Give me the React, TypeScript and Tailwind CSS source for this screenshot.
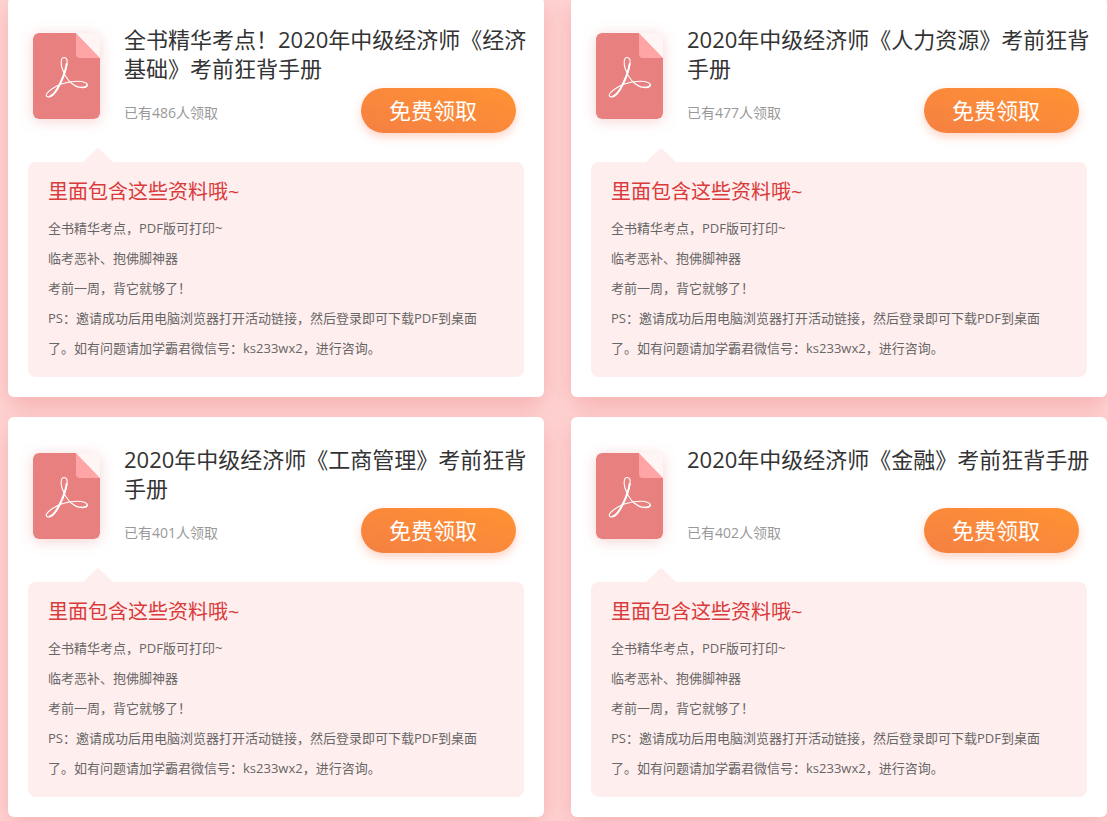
type Material = {
  id: string;
  title: string;
  claimed: number;
};

const materials: Material[] = [
  {
    id: "economy",
    title: "全书精华考点！2020年中级经济师《经济基础》考前狂背手册",
    claimed: 486,
  },
  {
    id: "hr",
    title: "2020年中级经济师《人力资源》考前狂背手册",
    claimed: 477,
  },
  {
    id: "business",
    title: "2020年中级经济师《工商管理》考前狂背手册",
    claimed: 401,
  },
  {
    id: "finance",
    title: "2020年中级经济师《金融》考前狂背手册",
    claimed: 402,
  },
];

const details = [
  "全书精华考点，PDF版可打印~",
  "临考恶补、抱佛脚神器",
  "考前一周，背它就够了！",
  "PS：邀请成功后用电脑浏览器打开活动链接，然后登录即可下载PDF到桌面了。如有问题请加学霸君微信号：ks233wx2，进行咨询。",
];

function PdfIcon() {
  return (
    <svg
      viewBox="0 0 67 86"
      className="mt-2 h-[86px] w-[67px] shrink-0 rounded-md shadow-[0_2px_14px_rgba(232,128,128,0.35)]"
      aria-hidden="true"
    >
      <path
        d="M5 0H43L67 25V81a5 5 0 0 1-5 5H5a5 5 0 0 1-5-5V5a5 5 0 0 1 5-5Z"
        fill="#e98080"
      />
      <path d="M43 0L67 25H47a4 4 0 0 1-4-4Z" fill="#ffa5a5" />
      <path d="M43 0H67V25Z" fill="#fff5f5" />
      <g fill="none" stroke="#fff" strokeLinejoin="round" strokeLinecap="round">
        <path
          d="M31 24.5C27.5 24.5 27.8 31 29 35C30.5 40 33 44.5 36 48C41 53 46 54.8 50 54.5C54.8 54 55.5 51.2 52.5 49.7C48.5 48 42.5 48 36.5 49C31 50 26 51.5 22 54C17 57 13.2 60 13.2 62.3C13.2 64.2 16 64.2 18 63.2C23 60.5 27 52 30 45C33 37 34.8 31 34 27C33.5 25 32.5 24.5 31 24.5Z"
          strokeWidth="1.1"
        />
        <path d="M33.6 31C33 37 29 48 24.5 55.5C22 59.8 19.5 62.5 17 63.4" strokeWidth="2" />
        <path d="M48 54.3C51.5 54.8 54 53.8 54 52" strokeWidth="1.6" />
      </g>
    </svg>
  );
}

function MaterialCard({ item }: { item: Material }) {
  return (
    <article className="relative rounded-md bg-white before:absolute before:inset-0 before:-z-10 before:rounded-md before:shadow-[0_8px_24px_rgba(230,100,100,0.34)]">
      <header className="flex gap-6 pt-7 pr-2 pb-[15px] pl-[25px]">
        <PdfIcon />
        <div className="min-w-0 flex-1">
          <h2 className="min-h-[58px] text-[22px] leading-[29px] text-[#333333]">
            {item.title}
          </h2>
          <div className="mt-[5px] mr-5 flex items-center justify-between">
            <p className="pt-1 text-sm text-[#999999]">
              已有{item.claimed}人领取
            </p>
            <button
              type="button"
              className="h-[45px] w-[155px] rounded-full bg-linear-to-tr from-[#f58042] to-[#ff9232] pl-7 text-left text-[22px] text-white shadow-[0_4px_10px_rgba(255,110,60,0.3)]"
            >
              免费领取
            </button>
          </div>
        </div>
      </header>

      <svg
        viewBox="0 0 30 14"
        className="ml-[75px] block h-3.5 w-[30px]"
        aria-hidden="true"
      >
        <path d="M0 14L14 .6Q15 -.3 16 .6L30 14Z" fill="#ffeeee" />
      </svg>
      <section className="mx-5 mb-5 rounded-lg bg-[#ffeeee] pt-[15px] pr-10 pb-[14px] pl-5">
        <h3 className="mb-1.5 text-xl leading-[30px] text-[#d93a3a]">
          里面包含这些资料哦~
        </h3>
        {details.map((line) => (
          <p key={line} className="text-[13px] leading-[30px] text-[#666666]">
            {line}
          </p>
        ))}
      </section>
    </article>
  );
}

export default function App() {
  return (
    <main className="isolate min-h-screen overflow-hidden bg-[#ffd6d6] pr-px pb-1 pl-2 font-['Open_Sans','Noto_Sans_CJK_SC',sans-serif]">
      <div className="-mt-[3px] grid grid-cols-2 gap-x-[27px] gap-y-5">
        {materials.map((item) => (
          <MaterialCard key={item.id} item={item} />
        ))}
      </div>
    </main>
  );
}
